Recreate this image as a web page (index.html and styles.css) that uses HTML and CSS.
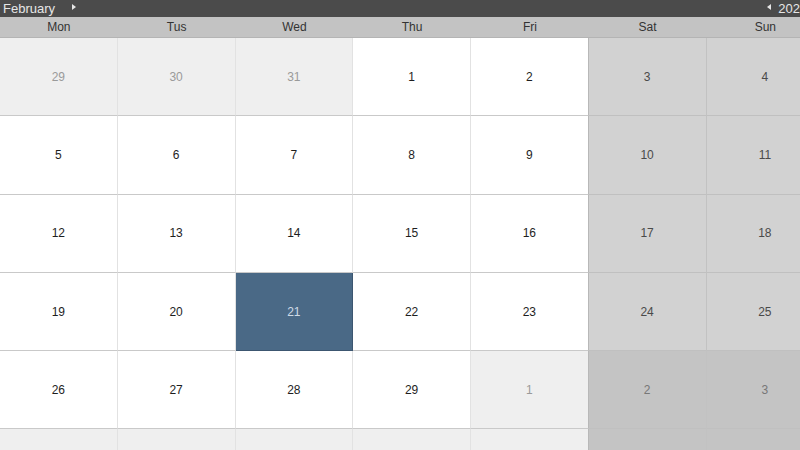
FILE: index.html
```html
<!DOCTYPE html>
<html>
<head>
<meta charset="utf-8">
<link rel="stylesheet" href="styles.css">
</head>
<body>
<div class="cal">
  <div class="topbar">
    <div class="nav"><span class="label">February</span><span class="tri-right"></span></div>
    <div class="nav"><span class="tri-left"></span><span class="label">202</span></div>
  </div>
  <div class="dow">
    <div>Mon</div><div>Tus</div><div>Wed</div><div>Thu</div><div>Fri</div><div>Sat</div><div>Sun</div>
  </div>
  <div class="grid">
    <div class="cell other">29</div><div class="cell other">30</div><div class="cell other">31</div><div class="cell">1</div><div class="cell fri">2</div><div class="cell wk">3</div><div class="cell wk">4</div>
    <div class="cell">5</div><div class="cell">6</div><div class="cell">7</div><div class="cell">8</div><div class="cell fri">9</div><div class="cell wk">10</div><div class="cell wk">11</div>
    <div class="cell">12</div><div class="cell">13</div><div class="cell">14</div><div class="cell">15</div><div class="cell fri">16</div><div class="cell wk">17</div><div class="cell wk">18</div>
    <div class="cell">19</div><div class="cell">20</div><div class="cell sel">21</div><div class="cell">22</div><div class="cell fri">23</div><div class="cell wk">24</div><div class="cell wk">25</div>
    <div class="cell">26</div><div class="cell">27</div><div class="cell">28</div><div class="cell">29</div><div class="cell other fri">1</div><div class="cell wk other">2</div><div class="cell wk other">3</div>
    <div class="cell other"></div><div class="cell other"></div><div class="cell other"></div><div class="cell other"></div><div class="cell other fri"></div><div class="cell wk other"></div><div class="cell wk other"></div>
  </div>
</div>
</body>
</html>
```

FILE: styles.css
```css
html, body {
  margin: 0;
  padding: 0;
  overflow: hidden;
  background: #ffffff;
}
body {
  font-family: "Liberation Sans", Arial, sans-serif;
  width: 800px;
  height: 450px;
}
.cal {
  width: 800px;
  height: 450px;
  overflow: hidden;
}
.topbar {
  height: 17px;
  background: #4b4b4b;
  display: flex;
  justify-content: space-between;
  align-items: center;
  padding: 0 0 0 3px;
  color: #e6e6e6;
  font-size: 13px;
}
.nav {
  display: flex;
  align-items: center;
  gap: 17px;
}
.nav .label {
  line-height: 17px;
}
.tri-right {
  width: 0;
  height: 0;
  border-top: 3px solid transparent;
  border-bottom: 3px solid transparent;
  border-left: 4px solid #e6e6e6;
  margin-top: -3px;
}
.tri-left {
  width: 0;
  height: 0;
  border-top: 3px solid transparent;
  border-bottom: 3px solid transparent;
  border-right: 4px solid #e6e6e6;
  margin-right: -10px;
  margin-top: -3px;
}
.dow {
  display: grid;
  grid-template-columns: repeat(7, 117.75px);
  height: 20px;
  background: #c3c3c3;
  border-bottom: 1px solid #b4b4b4;
  font-size: 12px;
  color: #333;
  line-height: 20px;
  text-align: center;
}
.grid {
  display: grid;
  grid-template-columns: repeat(7, 117.75px);
  grid-auto-rows: 78.3px;
}
.cell {
  box-sizing: border-box;
  display: flex;
  align-items: center;
  justify-content: center;
  font-size: 12px;
  color: #1e1e1e;
  background: #ffffff;
  border-right: 1px solid #e2e2e2;
  border-bottom: 1px solid #c9c9c9;
}
.cell.other {
  background: #efefef;
  color: #9a9a9a;
}
.cell.fri {
  border-right-color: #b8b8b8;
}
.cell.wk {
  background: #d2d2d2;
  color: #4a4a4a;
  border-right-color: #c2c2c2;
  border-bottom-color: #c0c0c0;
}
.cell.wk.other {
  background: #c4c4c4;
  color: #777;
}
.cell.sel {
  background: #4a6986;
  color: #cfdbe6;
  border-color: #3c5670;
}
```
